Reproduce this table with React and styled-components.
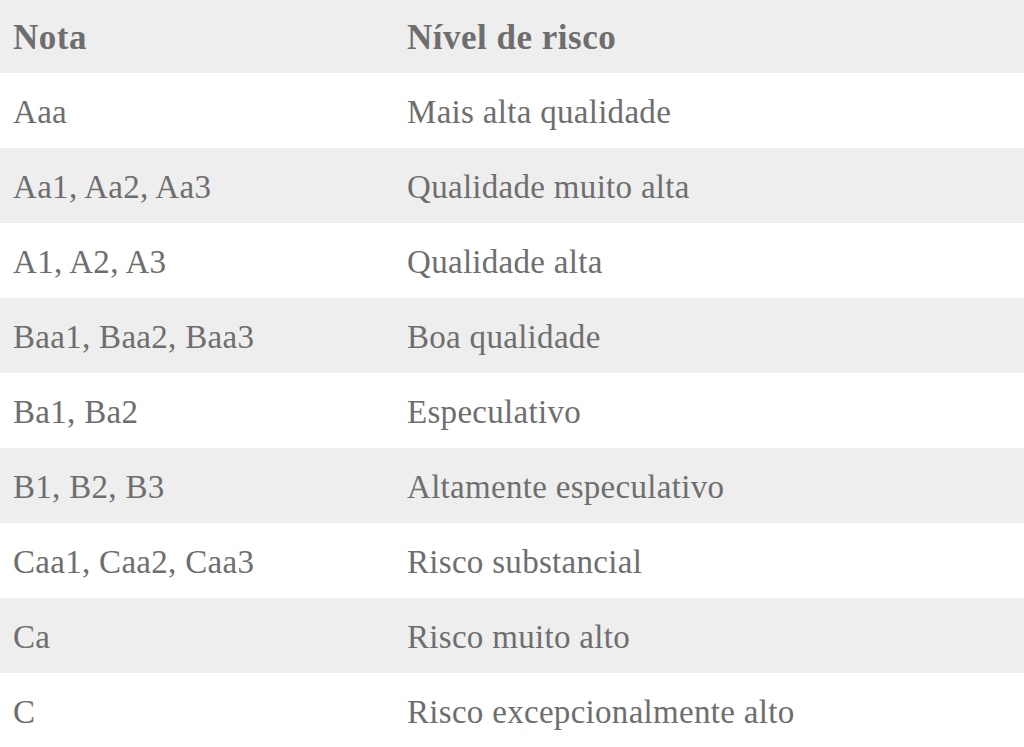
import React from 'react'
import styled, { createGlobalStyle } from 'styled-components'

const GlobalStyle = createGlobalStyle`
html, body {
  margin: 0;
  padding: 0;
  background: #ffffff;
}
`

const rows = [
  ['Aaa', 'Mais alta qualidade'],
  ['Aa1, Aa2, Aa3', 'Qualidade muito alta'],
  ['A1, A2, A3', 'Qualidade alta'],
  ['Baa1, Baa2, Baa3', 'Boa qualidade'],
  ['Ba1, Ba2', 'Especulativo'],
  ['B1, B2, B3', 'Altamente especulativo'],
  ['Caa1, Caa2, Caa3', 'Risco substancial'],
  ['Ca', 'Risco muito alto'],
  ['C', 'Risco excepcionalmente alto'],
]

const App = () => {
  return (
    <>
      <GlobalStyle />
      <Table>
        <HeadRow>
          <HeadCell>Nota</HeadCell>
          <HeadCell>Nível de risco</HeadCell>
        </HeadRow>
        {rows.map(([nota, nivel], i) => (
          <Row key={nota} $shaded={i % 2 === 1}>
            <Cell>{nota}</Cell>
            <Cell>{nivel}</Cell>
          </Row>
        ))}
      </Table>
    </>
  )
}

const Table = styled.div`
width: 1024px;
display: flex;
flex-direction: column;
font-family: "Liberation Serif", "DejaVu Serif", serif;
color: #6e6e6e;
`

const HeadRow = styled.div`
display: grid;
grid-template-columns: 394px 1fr;
height: 73px;
align-items: center;
background: #eeeeee;
`

const Row = styled.div`
display: grid;
grid-template-columns: 394px 1fr;
height: 75px;
align-items: center;
background: ${p => (p.$shaded ? '#eeeeee' : '#ffffff')};
`

const Cell = styled.div`
padding: 3px 13px 0;
font-size: 33px;
letter-spacing: 0.3px;
line-height: 1;
white-space: nowrap;
`

const HeadCell = styled(Cell)`
font-weight: 700;
font-size: 35px;
letter-spacing: 0.5px;
padding-top: 2px;
`

export default App
